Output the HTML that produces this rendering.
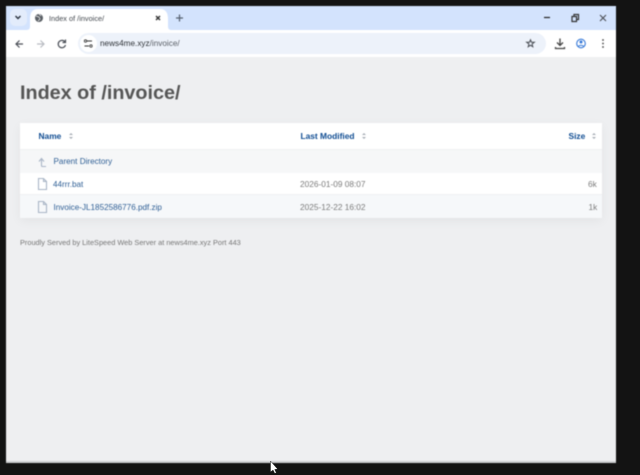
<!DOCTYPE html>
<html><head><meta charset="utf-8"><style>
html,body{margin:0;padding:0;width:640px;height:475px;overflow:hidden;background:#131313;font-family:"Liberation Sans",sans-serif}
div{position:absolute;white-space:nowrap}
svg{position:absolute;overflow:visible}
#w{left:6px;top:6px;width:610px;height:457px;background:#eeeff1;overflow:hidden;filter:blur(.4px)}
.a{color:#2f5f95;font-size:8.15px}
.h{color:#0f4c92;font-size:8.4px;font-weight:bold}
.g{color:#7b7b7b;font-size:8.3px}
</style></head><body>
<div id="w">
<div style="left:0;top:0;width:610px;height:24px;background:#d3e3fd"></div>
<div style="left:0;top:24px;width:610px;height:27px;background:#fff"></div>
<div style="left:0;top:51px;width:610px;height:3px;background:#eff0f1"></div>
<div style="left:4px;top:3px;width:17px;height:17px;border-radius:5px;background:#e3ecfb"></div>
<svg style="left:0;top:0" width="610" height="51" fill="none">
<path d="M9.500 10l2.500 2.500 2.500-2.500" stroke="#28303c" stroke-width="1.400"/>
<path d="M20 24c3 0 4-1 4-4v-7q0-10 8-10h122q8 0 8 10v7c0 3 1 4 4 4z" fill="#fff"/>
<circle cx="33" cy="12" r="4" fill="#5a5f65"/><path d="M30 10l3 1 1 2-2 2M33 8l2 2" stroke="#fff" stroke-width=".7"/>
<path d="M150 10l4 4m0-4l-4 4" stroke="#333" stroke-width="1.400"/>
<path d="M170 12h7m-3.500-3.500v7" stroke="#55606f" stroke-width="1.200"/>
<path d="M538 11.500h6" stroke="#222" stroke-width="1.200"/>
<path d="M566 10.500h4.500v5h-4.500zM568 10.500v-2h4.500v5h-2" stroke="#333" stroke-width="1.200"/>
<path d="M594 9l6 6m0-6l-6 6" stroke="#4b4f55" stroke-width="1.100"/>
<path d="M17 38h-6.500m3-3.500l-3.500 3.500 3.500 3.500" stroke="#4c5058" stroke-width="1.200"/>
<path d="M31 38h6.500m-3-3.500l3.500 3.500-3.500 3.500" stroke="#b9bcc2" stroke-width="1.200"/>
<path d="M59 36a3.700 3.700 0 1 0 .5 3M59.500 33.500v3h-3" stroke="#4c5058" stroke-width="1.200"/>
</svg>
<div style="left:72px;top:27px;width:468px;height:21px;border-radius:11px;background:#edf2fa"></div>
<div style="left:74px;top:29px;width:17px;height:17px;border-radius:9px;background:#fff"></div>
<svg style="left:0;top:0" width="610" height="51" fill="none">
<path d="M81 35h5M78.500 40h4.500" stroke="#333" stroke-width="1"/><circle cx="79.500" cy="35" r="1.200" stroke="#333" stroke-width=".8"/><circle cx="85" cy="40" r="1.200" stroke="#333" stroke-width=".8"/>
<path d="M524.500 33.800l1 2.500h2.800l-2.200 1.700.7 2.700-2.300-1.500-2.300 1.500.7-2.700-2.200-1.700h2.800z" stroke="#4a4e55" stroke-width="1"/>
<path d="M554 32.500v7m-3-3l3 3 3-3M549.500 41v1.500h9V41" stroke="#444" stroke-width="1.300"/>
<circle cx="575" cy="37.500" r="4.300" stroke="#3578d8" stroke-width="1.100"/><circle cx="575" cy="36" r="1.500" fill="#3578d8"/><path d="M572 40.500q3-2.500 6 0" stroke="#3578d8"/>
<circle cx="597" cy="34" r=".9" fill="#444"/><circle cx="597" cy="37.500" r=".9" fill="#444"/><circle cx="597" cy="41" r=".9" fill="#444"/>
</svg>
<div style="left:43px;top:8px;font-size:7.350px;color:#454a50">Index of /invoice/</div>
<div style="left:94px;top:33px;font-size:8.200px;color:#2f3338">news4me.xyz<span style="color:#5a5f66">/invoice/</span></div>

<div style="left:14px;top:75.500px;font-size:19.800px;font-weight:bold;color:#555">Index of /invoice/</div>
<div style="left:14px;top:117px;width:582px;height:95px;background:#fff;box-shadow:0 3px 10px rgba(0,0,0,.05)"></div>
<div style="left:14px;top:143px;width:582px;height:1px;background:#f0f1f2"></div>
<div style="left:14px;top:144px;width:582px;height:23px;background:#f6f7f8"></div>
<div style="left:14px;top:167px;width:582px;height:22px;background:#fff;border-bottom:1px solid #eff1f3;box-sizing:border-box"></div>
<div style="left:14px;top:189px;width:582px;height:23px;background:#f6f8fa"></div>
<div class="h" style="left:32.500px;top:125px">Name</div>
<div class="h" style="left:294.500px;top:125px">Last Modified</div>
<div class="h" style="left:562.500px;top:125px">Size</div>
<svg style="left:0;top:0" width="610" height="220" fill="none">
<g fill="#a7adb5"><path d="M63 129l2-2 2 2zM63 131h4l-2 2z"/><path d="M356 129l2-2 2 2zM356 131h4l-2 2z"/><path d="M586 129l2-2 2 2zM586 131h4l-2 2z"/></g>
<g stroke="#a9b5c6" stroke-width="1.100"><path d="M33 155.500l2.500-3 2.500 3M35.500 153v6.500q0 1 1 1h3.500"/>
<path d="M32.500 172.500h5l3 3v8h-8zM37.500 172.500v3h3"/><path d="M32.500 195.500h5l3 3v8h-8zM37.500 195.500v3h3"/></g>
</svg>
<div class="a" style="left:47.500px;top:150.500px">Parent Directory</div>
<div class="a" style="left:47px;top:173.500px">44rrr.bat</div>
<div class="a" style="left:47.500px;top:196.500px">Invoice-JL1852586776.pdf.zip</div>
<div class="g" style="left:294px;top:173px">2026-01-09 08:07</div>
<div class="g" style="left:294px;top:196px">2025-12-22 16:02</div>
<div class="g" style="left:582px;top:173px">6k</div>
<div class="g" style="left:582.500px;top:196px">1k</div>
<div style="left:14px;top:232px;font-size:7.370px;color:#777">Proudly Served by LiteSpeed Web Server at news4me.xyz Port 443</div>
<div style="left:0;top:455px;width:610px;height:2px;background:#d0d1d4"></div>
</div>
<svg style="left:0;top:0;position:absolute" width="640" height="475"><path d="M270.500 461v11l2.500-2 1.800 3.500 1.500-.8-1.600-3.200 3-.3z" fill="#fff" stroke="#222" stroke-width=".5"/></svg>
</body></html>
